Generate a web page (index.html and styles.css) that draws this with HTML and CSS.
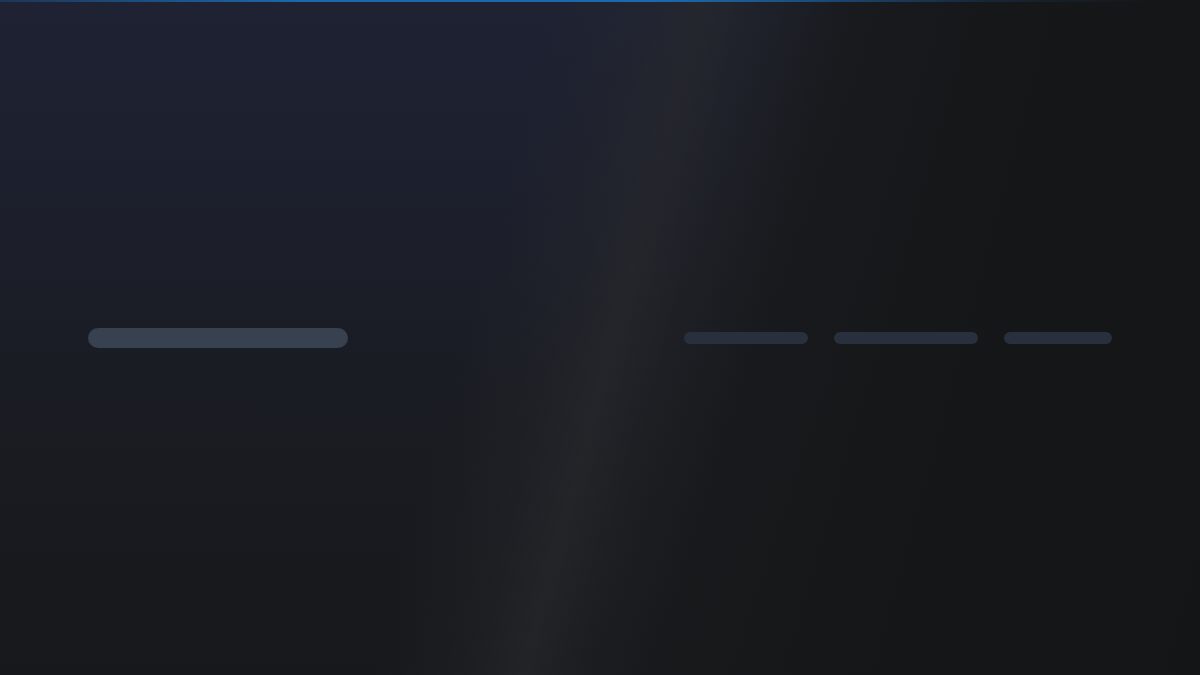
FILE: index.html
```html
<!DOCTYPE html>
<html lang="en">
<head>
<meta charset="utf-8">
<title>Loading</title>
<link rel="stylesheet" href="styles.css">
</head>
<body>
<div class="page">
  <header class="header">
    <div class="skeleton skeleton-logo"></div>
    <nav class="nav">
      <div class="skeleton skeleton-link w1"></div>
      <div class="skeleton skeleton-link w2"></div>
      <div class="skeleton skeleton-link w3"></div>
    </nav>
  </header>
</div>
</body>
</html>
```

FILE: styles.css
```css
html, body {
  margin: 0;
  padding: 0;
  height: 100%;
}

body {
  font-family: "Inter", "Liberation Sans", sans-serif;
  background-color: #17181a;
  background-image:
    linear-gradient(90deg, rgba(28, 100, 170, 0.3) 0%, #1b68ad 25%, #1b68ad 55%, rgba(28, 100, 170, 0.2) 82%, rgba(28, 100, 170, 0) 96%),
    linear-gradient(105deg, rgba(40, 41, 45, 0) 40%, rgba(40, 41, 45, 0.35) 47%, rgba(40, 41, 45, 0.68) 51%, rgba(40, 41, 45, 0.3) 55%, rgba(40, 41, 45, 0) 61%),
    linear-gradient(105deg, rgba(24, 25, 27, 0) 49%, rgba(24, 25, 27, 0.85) 62%, rgba(22, 23, 25, 1) 72%, #141517 100%),
    linear-gradient(180deg, #1e2233 0%, #1c1f2c 30%, #1a1c23 58%, #17181b 100%);
  background-size: 100% 2px, 100% 100%, 100% 100%, 100% 100%;
  background-repeat: no-repeat;
}

.page {
  height: 100%;
  display: flex;
  flex-direction: column;
}

.header {
  flex: 1;
  display: flex;
  align-items: center;
  justify-content: space-between;
  padding: 0 88px;
}

.skeleton {
  border-radius: 999px;
}

.skeleton-logo {
  width: 260px;
  height: 20px;
  background: #384150;
}

.nav {
  display: flex;
  align-items: center;
  gap: 26px;
}

.skeleton-link {
  height: 12px;
  background: #29303d;
}

.w1 { width: 124px; }
.w2 { width: 144px; }
.w3 { width: 108px; }
```
